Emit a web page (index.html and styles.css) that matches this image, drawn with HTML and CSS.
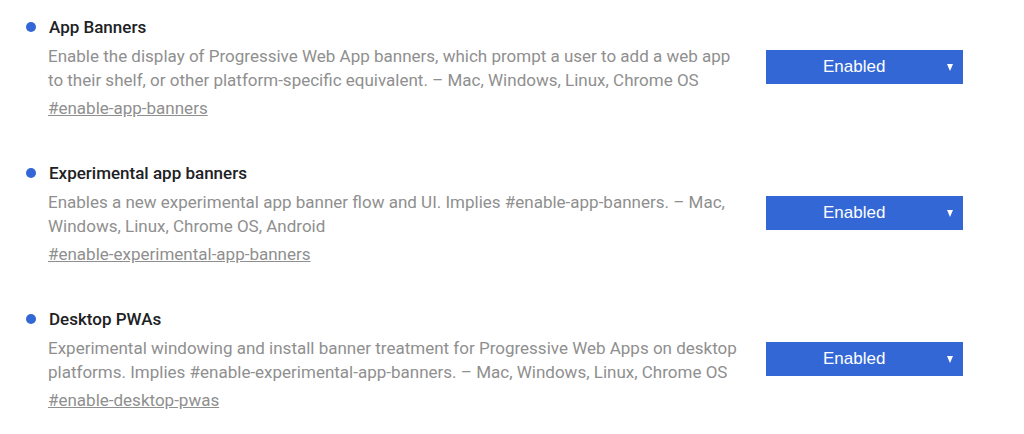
FILE: index.html
```html
<!DOCTYPE html>
<html lang="en">
<head>
<meta charset="utf-8">
<title>Flags</title>
<link rel="stylesheet" href="styles.css">
</head>
<body>
<div class="list">
  <div class="experiment">
    <h2 class="exp-title"><span class="dot"></span>App Banners</h2>
    <div class="exp-body">
      <div class="exp-text">
        <p class="exp-desc">Enable the display of Progressive Web App banners, which prompt a user to add a web app to their shelf, or other platform-specific equivalent. – Mac, Windows, Linux, Chrome OS</p>
        <a class="exp-link" href="#enable-app-banners">#enable-app-banners</a>
      </div>
      <div class="select"><span class="select-label">Enabled</span><span class="arrow"></span></div>
    </div>
  </div>
  <div class="experiment">
    <h2 class="exp-title"><span class="dot"></span>Experimental app banners</h2>
    <div class="exp-body">
      <div class="exp-text">
        <p class="exp-desc">Enables a new experimental app banner flow and UI. Implies #enable-app-banners. – Mac, Windows, Linux, Chrome OS, Android</p>
        <a class="exp-link" href="#enable-experimental-app-banners">#enable-experimental-app-banners</a>
      </div>
      <div class="select"><span class="select-label">Enabled</span><span class="arrow"></span></div>
    </div>
  </div>
  <div class="experiment">
    <h2 class="exp-title"><span class="dot"></span>Desktop PWAs</h2>
    <div class="exp-body">
      <div class="exp-text">
        <p class="exp-desc">Experimental windowing and install banner treatment for Progressive Web Apps on desktop platforms. Implies #enable-experimental-app-banners. – Mac, Windows, Linux, Chrome OS</p>
        <a class="exp-link" href="#enable-desktop-pwas">#enable-desktop-pwas</a>
      </div>
      <div class="select"><span class="select-label">Enabled</span><span class="arrow"></span></div>
    </div>
  </div>
</div>
</body>
</html>
```
FILE: styles.css
```css
html, body {
  margin: 0;
  padding: 0;
  background: #ffffff;
}
body {
  font-family: Roboto, "Noto Sans", sans-serif;
}
.list {
  display: flex;
  flex-direction: column;
  gap: 41px;
  padding: 15px 0 0 26px;
}
.experiment {
  display: flex;
  flex-direction: column;
  gap: 5px;
}
.exp-title {
  display: flex;
  align-items: center;
  gap: 13px;
  margin: 0;
  font-size: 17px;
  font-weight: 500;
  line-height: 24px;
  color: #202124;
}
.dot {
  width: 10px;
  height: 10px;
  border-radius: 50%;
  background: #3367d6;
  flex: none;
}
.exp-body {
  display: flex;
  align-items: flex-start;
  padding-left: 22px;
}
.exp-text {
  width: 700px;
  display: flex;
  flex-direction: column;
  gap: 4px;
}
.exp-desc {
  margin: 0;
  font-size: 17px;
  line-height: 24px;
  color: #8f8f8f;
}
.exp-link {
  align-self: flex-start;
  font-size: 17px;
  line-height: 24px;
  color: #8f8f8f;
  text-decoration: underline;
}
.select {
  margin: 6px 0 0 18px;
  width: 197px;
  height: 34px;
  box-sizing: border-box;
  background: #3367d6;
  color: #ffffff;
  font-family: "Liberation Sans", Arial, sans-serif;
  font-size: 17px;
  display: flex;
  align-items: center;
  padding: 0 10px 0 57px;
}
.select-label {
  flex: 1;
}
.arrow {
  width: 0;
  height: 0;
  border-left: 3.5px solid transparent;
  border-right: 3.5px solid transparent;
  border-top: 7px solid #ffffff;
}
```
